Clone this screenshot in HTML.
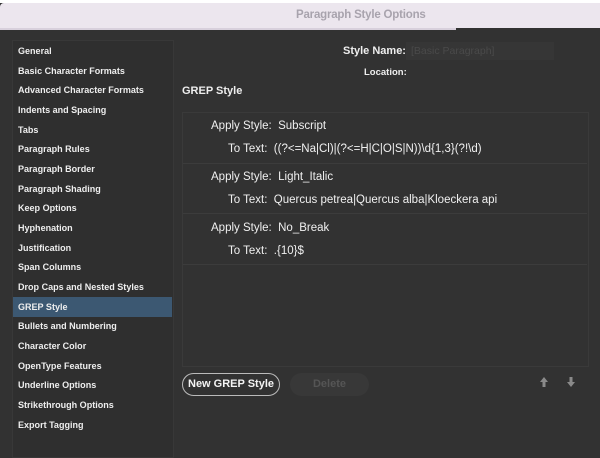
<!DOCTYPE html>
<html><head><style>
body{margin:0;width:600px;height:456px;overflow:hidden;background:#323232;font-family:"Liberation Sans",sans-serif;position:relative;color:#e8e8e8}
.top{position:absolute;left:0;top:0;width:600px;height:3px;background:#fff}
.tb{position:absolute;left:0;top:3px;width:600px;height:25px;background:#ece6ee;border-top-left-radius:4px}
.tb span{position:absolute;left:296px;top:6px;font-size:11.5px;font-weight:bold;color:#a8a3ad;letter-spacing:-.2px}
.tl{position:absolute;left:0;top:28px;width:456px;height:2px;background:#d8d0dc}
.side{position:absolute;left:12px;top:40px;width:160px;height:416px;background:#2f2f2f;border:1px solid #383838}
.it{position:absolute;left:18px;font-size:9.5px;font-weight:bold;color:#eee;transform:scaleX(.95);transform-origin:left}
.sel{position:absolute;left:13px;top:297px;width:159px;height:20px;background:#3c5872}
.lab{position:absolute;font-size:10px;font-weight:bold;color:#eee}
.box{position:absolute;left:182px;top:112px;width:405px;height:253px;border:1px solid #3a3a3a;background:#323232}
.sep{position:absolute;left:183px;width:404px;height:1px;background:#3c3c3c}
.r{position:absolute;font-size:11.5px;color:#f0f0f0}
.btn{position:absolute;left:182px;top:373px;width:96px;height:21px;border:1.5px solid #bbb;border-radius:12px;font-size:11px;text-align:center;line-height:21px;color:#f4f4f4;font-weight:bold}
.del{position:absolute;left:290px;top:373px;width:79px;height:23px;border-radius:12px;background:#383838;color:#555;font-size:11px;text-align:center;line-height:23px;font-weight:bold}
</style></head><body>
<div class="top"></div>
<div class="tb"><span>Paragraph Style Options</span></div>
<div class="tl"></div>
<div class="side"></div>
<div class="sel"></div>
<div class="it" style="top:46px">General</div>
<div class="it" style="top:66px">Basic Character Formats</div>
<div class="it" style="top:85px">Advanced Character Formats</div>
<div class="it" style="top:105px">Indents and Spacing</div>
<div class="it" style="top:125px">Tabs</div>
<div class="it" style="top:144px">Paragraph Rules</div>
<div class="it" style="top:164px">Paragraph Border</div>
<div class="it" style="top:184px">Paragraph Shading</div>
<div class="it" style="top:203px">Keep Options</div>
<div class="it" style="top:223px">Hyphenation</div>
<div class="it" style="top:243px">Justification</div>
<div class="it" style="top:262px">Span Columns</div>
<div class="it" style="top:282px">Drop Caps and Nested Styles</div>
<div class="it" style="top:302px">GREP Style</div>
<div class="it" style="top:321px">Bullets and Numbering</div>
<div class="it" style="top:341px">Character Color</div>
<div class="it" style="top:361px">OpenType Features</div>
<div class="it" style="top:380px">Underline Options</div>
<div class="it" style="top:400px">Strikethrough Options</div>
<div class="it" style="top:420px">Export Tagging</div>
<div class="lab" style="left:343px;top:45px;font-size:11px">Style Name:</div>
<div style="position:absolute;left:406px;top:42px;width:143px;height:18px;background:#363636;color:#4a4a4a;font-size:10.5px;line-height:18px;padding-left:5px">[Basic Paragraph]</div>
<div class="lab" style="left:364px;top:67px;font-size:9.5px">Location:</div>
<div class="lab" style="left:182px;top:85px;font-size:11px">GREP Style</div>
<div class="box"></div>
<div class="sep" style="top:163px"></div>
<div class="sep" style="top:213px"></div>
<div class="sep" style="top:264px"></div>
<div class="r" style="left:211px;top:120px">Apply Style: &nbsp;Subscript</div>
<div class="r" style="left:228px;top:143px">To Text: &nbsp;((?&lt;=Na|Cl)|(?&lt;=H|C|O|S|N))\d{1,3}(?!\d)</div>
<div class="r" style="left:211px;top:171px">Apply Style: &nbsp;Light_Italic</div>
<div class="r" style="left:228px;top:194px">To Text: &nbsp;Quercus petrea|Quercus alba|Kloeckera api</div>
<div class="r" style="left:211px;top:222px">Apply Style: &nbsp;No_Break</div>
<div class="r" style="left:228px;top:245px">To Text: &nbsp;.{10}$</div>
<div class="btn">New GREP Style</div>
<div class="del">Delete</div>
<svg style="position:absolute;left:539px;top:376px" width="40" height="12"><path d="M5 1L1 6H3.5V11H6.5V6H9Z" fill="#8a8a8a"/><path d="M32 11L28 6H30.5V1H33.5V6H36Z" fill="#8a8a8a"/></svg>
</body></html>
